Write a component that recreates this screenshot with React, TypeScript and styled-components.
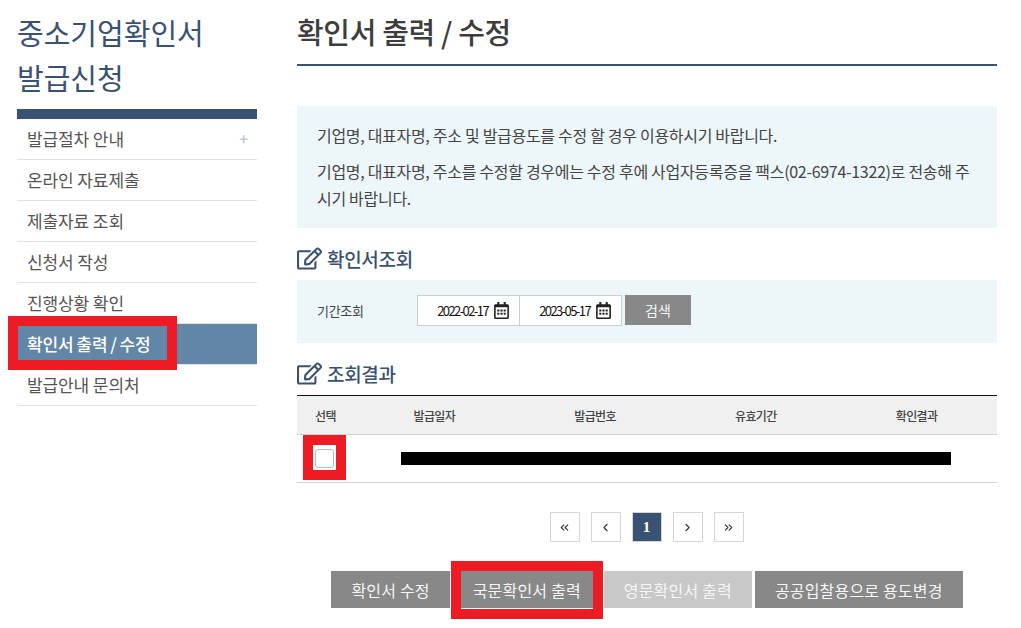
import React from 'react';
import styled, { createGlobalStyle } from 'styled-components';
import { ChevronLeft, ChevronRight, ChevronsLeft, ChevronsRight } from 'lucide-react';
import { FaRegCalendarAlt, FaRegEdit } from 'react-icons/fa';

const navy = '#3a5272';
const menus = ['발급절차 안내', '온라인 자료제출', '제출자료 조회', '신청서 작성', '진행상황 확인', '확인서 출력 / 수정', '발급안내 문의처'];
const columns = ['선택', '발급일자', '발급번호', '유효기간', '확인결과'];

const DateField = ({ value }: { value: string }) => (
  <DateCell>
    <span>{value}</span>
    <FaRegCalendarAlt size={17} color="#222" />
  </DateCell>
);

const SectionTitle = ({ children }: { children: React.ReactNode }) => (
  <SectionHead>
    <FaRegEdit size={25} color={navy} />
    <span>{children}</span>
  </SectionHead>
);

const App = () => {
  return (
    <Page>
      <GlobalStyle />
      <Sidebar>
        <SideTitle>
          중소기업확인서
          <br />
          발급신청
        </SideTitle>
        <Menu>
          {menus.map((m, i) => (
            <MenuItem key={m} $active={i === 5}>
              <span>{m}</span>
              {i === 0 && <Plus>+</Plus>}
              {i === 5 && <MenuMark />}
            </MenuItem>
          ))}
        </Menu>
      </Sidebar>
      <Main>
        <PageTitle>확인서 출력 / 수정</PageTitle>
        <Notice>
          <p>기업명, 대표자명, 주소 및 발급용도를 수정 할 경우 이용하시기 바랍니다.</p>
          <p>기업명, 대표자명, 주소를 수정할 경우에는 수정 후에 사업자등록증을 팩스(02-6974-1322)로 전송해 주시기 바랍니다.</p>
        </Notice>
        <SectionTitle>확인서조회</SectionTitle>
        <SearchBox>
          <SearchLabel>기간조회</SearchLabel>
          <DateGroup>
            <DateField value="2022-02-17" />
            <DateField value="2023-05-17" />
          </DateGroup>
          <SearchButton>검색</SearchButton>
        </SearchBox>
        <SectionTitle>조회결과</SectionTitle>
        <Table>
          <thead>
            <tr>
              {columns.map((c) => (
                <th key={c}>{c}</th>
              ))}
            </tr>
          </thead>
          <tbody>
            <tr>
              <CheckCell>
                <CheckBox />
                <CheckMark />
              </CheckCell>
              <td colSpan={4}>
                <Redacted />
              </td>
            </tr>
          </tbody>
        </Table>
        <Pager>
          <PageButton><ChevronsLeft size={13} /></PageButton>
          <PageButton><ChevronLeft size={13} /></PageButton>
          <PageButton $current>1</PageButton>
          <PageButton><ChevronRight size={13} /></PageButton>
          <PageButton><ChevronsRight size={13} /></PageButton>
        </Pager>
        <Actions>
          <ActionButton>확인서 수정</ActionButton>
          <ActionButton>
            국문확인서 출력
            <ButtonMark />
          </ActionButton>
          <ActionButton $disabled>영문확인서 출력</ActionButton>
          <ActionButton>공공입찰용으로 용도변경</ActionButton>
        </Actions>
      </Main>
    </Page>
  );
};

export default App;

const GlobalStyle = createGlobalStyle`
  html, body {
    margin: 0;
    padding: 0;
    background: #fff;
  }
  body {
    font-family: "Noto Sans CJK KR", "Noto Sans", sans-serif;
    color: #444;
  }
  * {
    box-sizing: border-box;
  }
`;

const Page = styled.div`
  display: flex;
  gap: 40px;
  width: 1021px;
  height: 628px;
  padding-left: 17px;
  overflow: hidden;
`;

const Sidebar = styled.aside`
  width: 240px;
  flex: none;
  padding-top: 10px;
`;

const SideTitle = styled.h2`
  margin: 0 0 9px;
  font-size: 29px;
  line-height: 45px;
  font-weight: 400;
  letter-spacing: 0;
  color: ${navy};
`;

const Menu = styled.ul`
  margin: 0;
  padding: 0;
  list-style: none;
  border-top: 10px solid ${navy};
`;

const MenuItem = styled.li<{ $active?: boolean }>`
  position: relative;
  display: flex;
  align-items: center;
  justify-content: space-between;
  height: 41px;
  padding: 0 10px 2px;
  font-size: 17px;
  letter-spacing: -0.1px;
  border-bottom: 1px solid #e2e2e2;
  color: ${(p) => (p.$active ? '#fff' : '#555')};
  font-weight: ${(p) => (p.$active ? 500 : 400)};
  background: ${(p) => (p.$active ? '#6286a8' : 'transparent')};
  word-spacing: ${(p) => (p.$active ? '-1px' : '0')};
`;

const Plus = styled.span`
  color: #c5cad3;
  font-size: 15px;
  font-weight: 700;
  margin-right: -1px;
`;

const MenuMark = styled.span`
  position: absolute;
  left: -9px;
  top: -8px;
  width: 169px;
  height: 54px;
  border: 10px solid #ed1c24;
`;

const Main = styled.main`
  width: 700px;
  flex: none;
`;

const PageTitle = styled.h1`
  margin: 0 0 40px;
  height: 66px;
  padding-top: 9px;
  font-size: 29px;
  line-height: 44px;
  font-weight: 500;
  letter-spacing: -0.35px;
  color: #3d3d3d;
  border-bottom: 2px solid ${navy};
`;

const Notice = styled.div`
  height: 122px;
  padding: 16px 20px 0;
  background: #edf6f9;
  font-size: 16px;
  line-height: 27px;
  letter-spacing: -0.3px;
  word-break: break-all;
  color: #444;
  p {
    margin: 0 0 9px;
  }
`;

const SectionHead = styled.div`
  display: flex;
  align-items: center;
  gap: 5px;
  height: 52px;
  padding-top: 8px;
  font-size: 19px;
  font-weight: 500;
  letter-spacing: -0.3px;
  color: ${navy};
`;

const SearchBox = styled.div`
  display: flex;
  align-items: center;
  height: 63px;
  padding-left: 20px;
  padding-bottom: 3px;
  background: #edf6f9;
`;

const SearchLabel = styled.span`
  width: 100px;
  font-size: 13px;
  letter-spacing: -0.3px;
  color: #444;
`;

const DateGroup = styled.div`
  display: flex;
  width: 205px;
  height: 31px;
  border: 1px solid #c9ced4;
  background: #fff;
`;

const DateCell = styled.div`
  flex: 1;
  display: flex;
  align-items: center;
  justify-content: flex-end;
  gap: 5px;
  padding-right: 9px;
  font-size: 13px;
  letter-spacing: -1.6px;
  color: #111;
  & + & {
    border-left: 1px solid #c9ced4;
  }
`;

const SearchButton = styled.button`
  width: 66px;
  height: 30px;
  margin-left: 3px;
  margin-bottom: 1px;
  border: 0;
  background: #888;
  color: #f4f4f4;
  font-family: inherit;
  font-size: 14px;
`;

const Table = styled.table`
  width: 100%;
  border-collapse: collapse;
  table-layout: fixed;
  border-top: 1px solid #111;
  th {
    height: 39px;
    padding: 0;
    background: #f0f0f0;
    border-bottom: 1px solid #cfd2d8;
    font-size: 12px;
    font-weight: 500;
    letter-spacing: -0.6px;
    color: #444;
  }
  th:first-child {
    width: 57px;
  }
  td {
    height: 48px;
    padding: 0;
    border-bottom: 1px solid #cfd2d8;
  }
`;

const CheckCell = styled.td`
  position: relative;
`;

const CheckBox = styled.span`
  display: block;
  width: 19px;
  height: 19px;
  margin: -1px 0 0 18px;
  border: 1px solid #b8b8b8;
  border-radius: 3px;
  background: #fff;
`;

const CheckMark = styled.span`
  position: absolute;
  left: 6px;
  top: 0;
  width: 43px;
  height: 45px;
  border: 10px solid #ed1c24;
`;

const Redacted = styled.div`
  width: 550px;
  height: 13px;
  margin: -1px 0 0 47px;
  background: #000;
`;

const Pager = styled.nav`
  display: flex;
  justify-content: center;
  gap: 11px;
  margin-top: 29px;
  padding-right: 1px;
`;

const PageButton = styled.button<{ $current?: boolean }>`
  display: flex;
  align-items: center;
  justify-content: center;
  width: 30px;
  height: 30px;
  padding: 0;
  border: 1px solid #d6d6d6;
  background: ${(p) => (p.$current ? navy : '#fff')};
  color: ${(p) => (p.$current ? '#fff' : '#333')};
  font-family: "Liberation Serif", serif;
  font-weight: 700;
  font-size: 15px;
`;

const Actions = styled.div`
  display: flex;
  justify-content: center;
  gap: 3px;
  margin-top: 29px;
`;

const ActionButton = styled.button<{ $disabled?: boolean }>`
  position: relative;
  height: 37px;
  padding: 0 20px;
  border: 0;
  background: ${(p) => (p.$disabled ? '#c8c8c8' : '#888')};
  color: #f6f6f6;
  font-family: inherit;
  font-size: 16px;
  letter-spacing: 0.18px;
  white-space: nowrap;
`;

const ButtonMark = styled.span`
  position: absolute;
  left: -2px;
  top: -10px;
  width: 152px;
  height: 58px;
  border: 10px solid #ed1c24;
`;
